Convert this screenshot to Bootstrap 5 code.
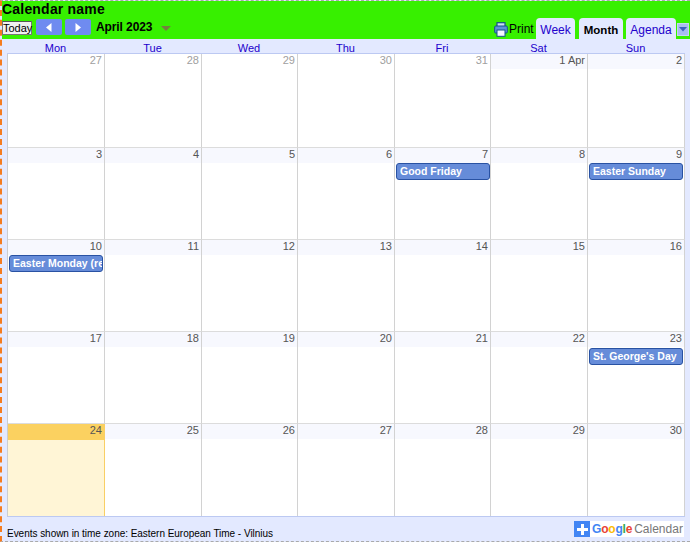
<!DOCTYPE html>
<html lang="en">
<head>
<meta charset="utf-8">
<title>Calendar name</title>
<link href="https://cdn.jsdelivr.net/npm/bootstrap@5.3.0/dist/css/bootstrap.min.css" rel="stylesheet">
<style>
html,body{height:100%}
body{font-family:"Liberation Sans",Arial,sans-serif;font-size:12px;background:#fff;color:#000;overflow:hidden}
.frame{width:690px;height:542px;border-top:1px dashed #aaa;border-bottom:1px dashed #aaa;border-left:2px dashed #f57c1f;background:#e3e9ff}
.head-band{background:#37f000;height:38px}
.cal-title{font-size:14px;font-weight:700;line-height:16px;letter-spacing:.2px;height:18px}
.tool-row{height:20px}
.today-btn{font-size:11px;line-height:12px;height:14px;width:30px;padding:0;margin-top:2px;background:#f0f0f0;border:1px solid #767676;color:#000;border-top-color:#555;border-radius:1px}
.nav-arrow{width:26px;height:16px;background:#6f8bf0;border-radius:2px}
.nav-first{margin-left:4px}
.nav-second{margin-left:3px}
.month-label{font-size:12px;font-weight:700;margin-left:5px;line-height:16px;letter-spacing:-.1px}
.drop-tri{margin-left:9px;margin-top:7px}
.right-tools{margin-left:auto;align-self:flex-end;margin-right:1px}
.print-icon{margin-bottom:2px;margin-right:1px}
.print-link{font-size:12px;line-height:16px;height:18px;width:24px;white-space:nowrap}
.view-tab{background:#e3e9ff;border-radius:4px 4px 0 0;font-size:12px;color:#2200cc;height:21px;line-height:24px;text-align:center}
.tab-week{width:39px;margin-left:3px}
.tab-month{width:44px;margin-left:4px;color:#000;font-weight:700;font-size:11.500px}
.tab-agenda{width:50px;margin-left:3px}
.tab-menu{width:12px;height:13px;background:#a9bdf0;margin-left:1px;margin-bottom:3px;border:1px solid #c6d3f5}
.cal-zone{padding:0 5px}
.dow-row{display:grid;grid-template-columns:97px 97px 96px 97px 96px 97px 97px;height:15px;border-bottom:1px solid #bcc9f2;font-size:11px;line-height:18px;color:#2200cc;text-align:center}
.month-grid{display:grid;grid-template-columns:97px 97px 96px 97px 96px 97px 97px;grid-template-rows:94px 92px 92px 92px 92px;background:#fff;border-left:1px solid #ccc;border-bottom:1px solid #bcc9f2;width:678px}
.day-cell{border-right:1px solid #d2d2d2;border-bottom:1px solid #dcdcdc;min-width:0;position:relative}
.row-end{border-bottom:0}
.day-num{background:#f7f8fe;height:15px;line-height:13px;text-align:right;font-size:11px;color:#555;padding-right:2px}
.day-off .day-num{background:#fff;color:#a0a0a0}
.day-today{background:#fff5d6;border-right-color:#f9cf65}
.day-today .day-num{background:#fbd160;color:#555;height:16px}
.cal-event{margin:0 0 0 1px;height:17px;background:#668cd9;border:1px solid #2952a3;border-radius:3px;color:#fff;font-weight:700;font-size:10.500px;line-height:15px;padding-left:3px;white-space:nowrap;overflow:hidden;width:94px}
.event-low{margin-top:1px}
.foot-row{height:25px}
.tz-note{font-size:10px;line-height:12px;padding-top:11px;letter-spacing:-.03px}
.gcal-badge{margin-left:auto;margin-top:4px;height:16px;background:#fff;width:110px;margin-right:1px;line-height:16px;white-space:nowrap}
.plus-box{width:16px;height:16px;background:#4285f4;flex:none}
.g-word{font-size:12px;font-weight:700;margin-left:2px;letter-spacing:-.2px}
.g-b{color:#4285f4}.g-r{color:#ea4335}.g-y{color:#fbbc05}.g-g{color:#34a853}
.g-cal{font-size:12px;color:#777;margin-left:2px}
</style>
</head>
<body>
<div class="frame">
  <div class="head-band">
    <div class="cal-title">Calendar name</div>
    <div class="tool-row d-flex align-items-start">
      <button class="today-btn" type="button">Today</button>
      <div class="nav-arrow nav-first d-flex align-items-center justify-content-center"><svg width="6" height="9" viewBox="0 0 6 9"><path d="M5.5 0v9L0 4.5z" fill="#fff"/></svg></div>
      <div class="nav-arrow nav-second d-flex align-items-center justify-content-center"><svg width="6" height="9" viewBox="0 0 6 9"><path d="M.5 0v9L6 4.5z" fill="#fff"/></svg></div>
      <div class="month-label">April 2023</div>
      <svg class="drop-tri" width="10" height="6" viewBox="0 0 10 6"><path d="M0 0h10L5 5z" fill="#75803f"/></svg>
      <div class="right-tools d-flex align-items-end">
        <svg class="print-icon" width="14" height="15" viewBox="0 0 14 15"><rect x="3" y=".7" width="8" height="4" fill="#cfe0f5" stroke="#14508a" stroke-width="1.200"/><rect x=".7" y="4" width="12.600" height="7" rx="1" fill="#5e93d8" stroke="#14508a"/><rect x="3" y="8" width="8" height="6.300" fill="#f4f7fd" stroke="#14508a"/></svg>
        <div class="print-link">Print</div>
        <div class="view-tab tab-week">Week</div>
        <div class="view-tab tab-month">Month</div>
        <div class="view-tab tab-agenda">Agenda</div>
        <div class="tab-menu d-flex align-items-center justify-content-center"><svg width="8" height="5" viewBox="0 0 8 5"><path d="M0 0h8L4 4.500z" fill="#3b5fc0"/></svg></div>
      </div>
    </div>
  </div>
  <div class="cal-zone">
    <div class="dow-row"><div>Mon</div><div>Tue</div><div>Wed</div><div>Thu</div><div>Fri</div><div>Sat</div><div>Sun</div></div>
    <div class="month-grid">
      <div class="day-cell day-off"><div class="day-num">27</div></div>
      <div class="day-cell day-off"><div class="day-num">28</div></div>
      <div class="day-cell day-off"><div class="day-num">29</div></div>
      <div class="day-cell day-off"><div class="day-num">30</div></div>
      <div class="day-cell day-off"><div class="day-num">31</div></div>
      <div class="day-cell"><div class="day-num">1 Apr</div></div>
      <div class="day-cell"><div class="day-num">2</div></div>

      <div class="day-cell"><div class="day-num">3</div></div>
      <div class="day-cell"><div class="day-num">4</div></div>
      <div class="day-cell"><div class="day-num">5</div></div>
      <div class="day-cell"><div class="day-num">6</div></div>
      <div class="day-cell"><div class="day-num">7</div><div class="cal-event">Good Friday</div></div>
      <div class="day-cell"><div class="day-num">8</div></div>
      <div class="day-cell"><div class="day-num">9</div><div class="cal-event">Easter Sunday</div></div>

      <div class="day-cell"><div class="day-num">10</div><div class="cal-event">Easter Monday (re</div></div>
      <div class="day-cell"><div class="day-num">11</div></div>
      <div class="day-cell"><div class="day-num">12</div></div>
      <div class="day-cell"><div class="day-num">13</div></div>
      <div class="day-cell"><div class="day-num">14</div></div>
      <div class="day-cell"><div class="day-num">15</div></div>
      <div class="day-cell"><div class="day-num">16</div></div>

      <div class="day-cell"><div class="day-num">17</div></div>
      <div class="day-cell"><div class="day-num">18</div></div>
      <div class="day-cell"><div class="day-num">19</div></div>
      <div class="day-cell"><div class="day-num">20</div></div>
      <div class="day-cell"><div class="day-num">21</div></div>
      <div class="day-cell"><div class="day-num">22</div></div>
      <div class="day-cell"><div class="day-num">23</div><div class="cal-event event-low">St. George's Day</div></div>

      <div class="day-cell row-end day-today"><div class="day-num">24</div></div>
      <div class="day-cell row-end"><div class="day-num">25</div></div>
      <div class="day-cell row-end"><div class="day-num">26</div></div>
      <div class="day-cell row-end"><div class="day-num">27</div></div>
      <div class="day-cell row-end"><div class="day-num">28</div></div>
      <div class="day-cell row-end"><div class="day-num">29</div></div>
      <div class="day-cell row-end"><div class="day-num">30</div></div>
    </div>
    <div class="foot-row d-flex">
      <div class="tz-note">Events shown in time zone: Eastern European Time - Vilnius</div>
      <div class="gcal-badge d-flex align-items-center">
        <div class="plus-box d-flex align-items-center justify-content-center"><svg width="11" height="11" viewBox="0 0 11 11"><path d="M4 0h3v4h4v3H7v4H4V7H0V4h4z" fill="#fff"/></svg></div>
        <span class="g-word"><span class="g-b">G</span><span class="g-r">o</span><span class="g-y">o</span><span class="g-b">g</span><span class="g-g">l</span><span class="g-r">e</span></span>
        <span class="g-cal">Calendar</span>
      </div>
    </div>
  </div>
</div>
<script src="https://cdn.jsdelivr.net/npm/bootstrap@5.3.0/dist/js/bootstrap.bundle.min.js"></script>
</body>
</html>
